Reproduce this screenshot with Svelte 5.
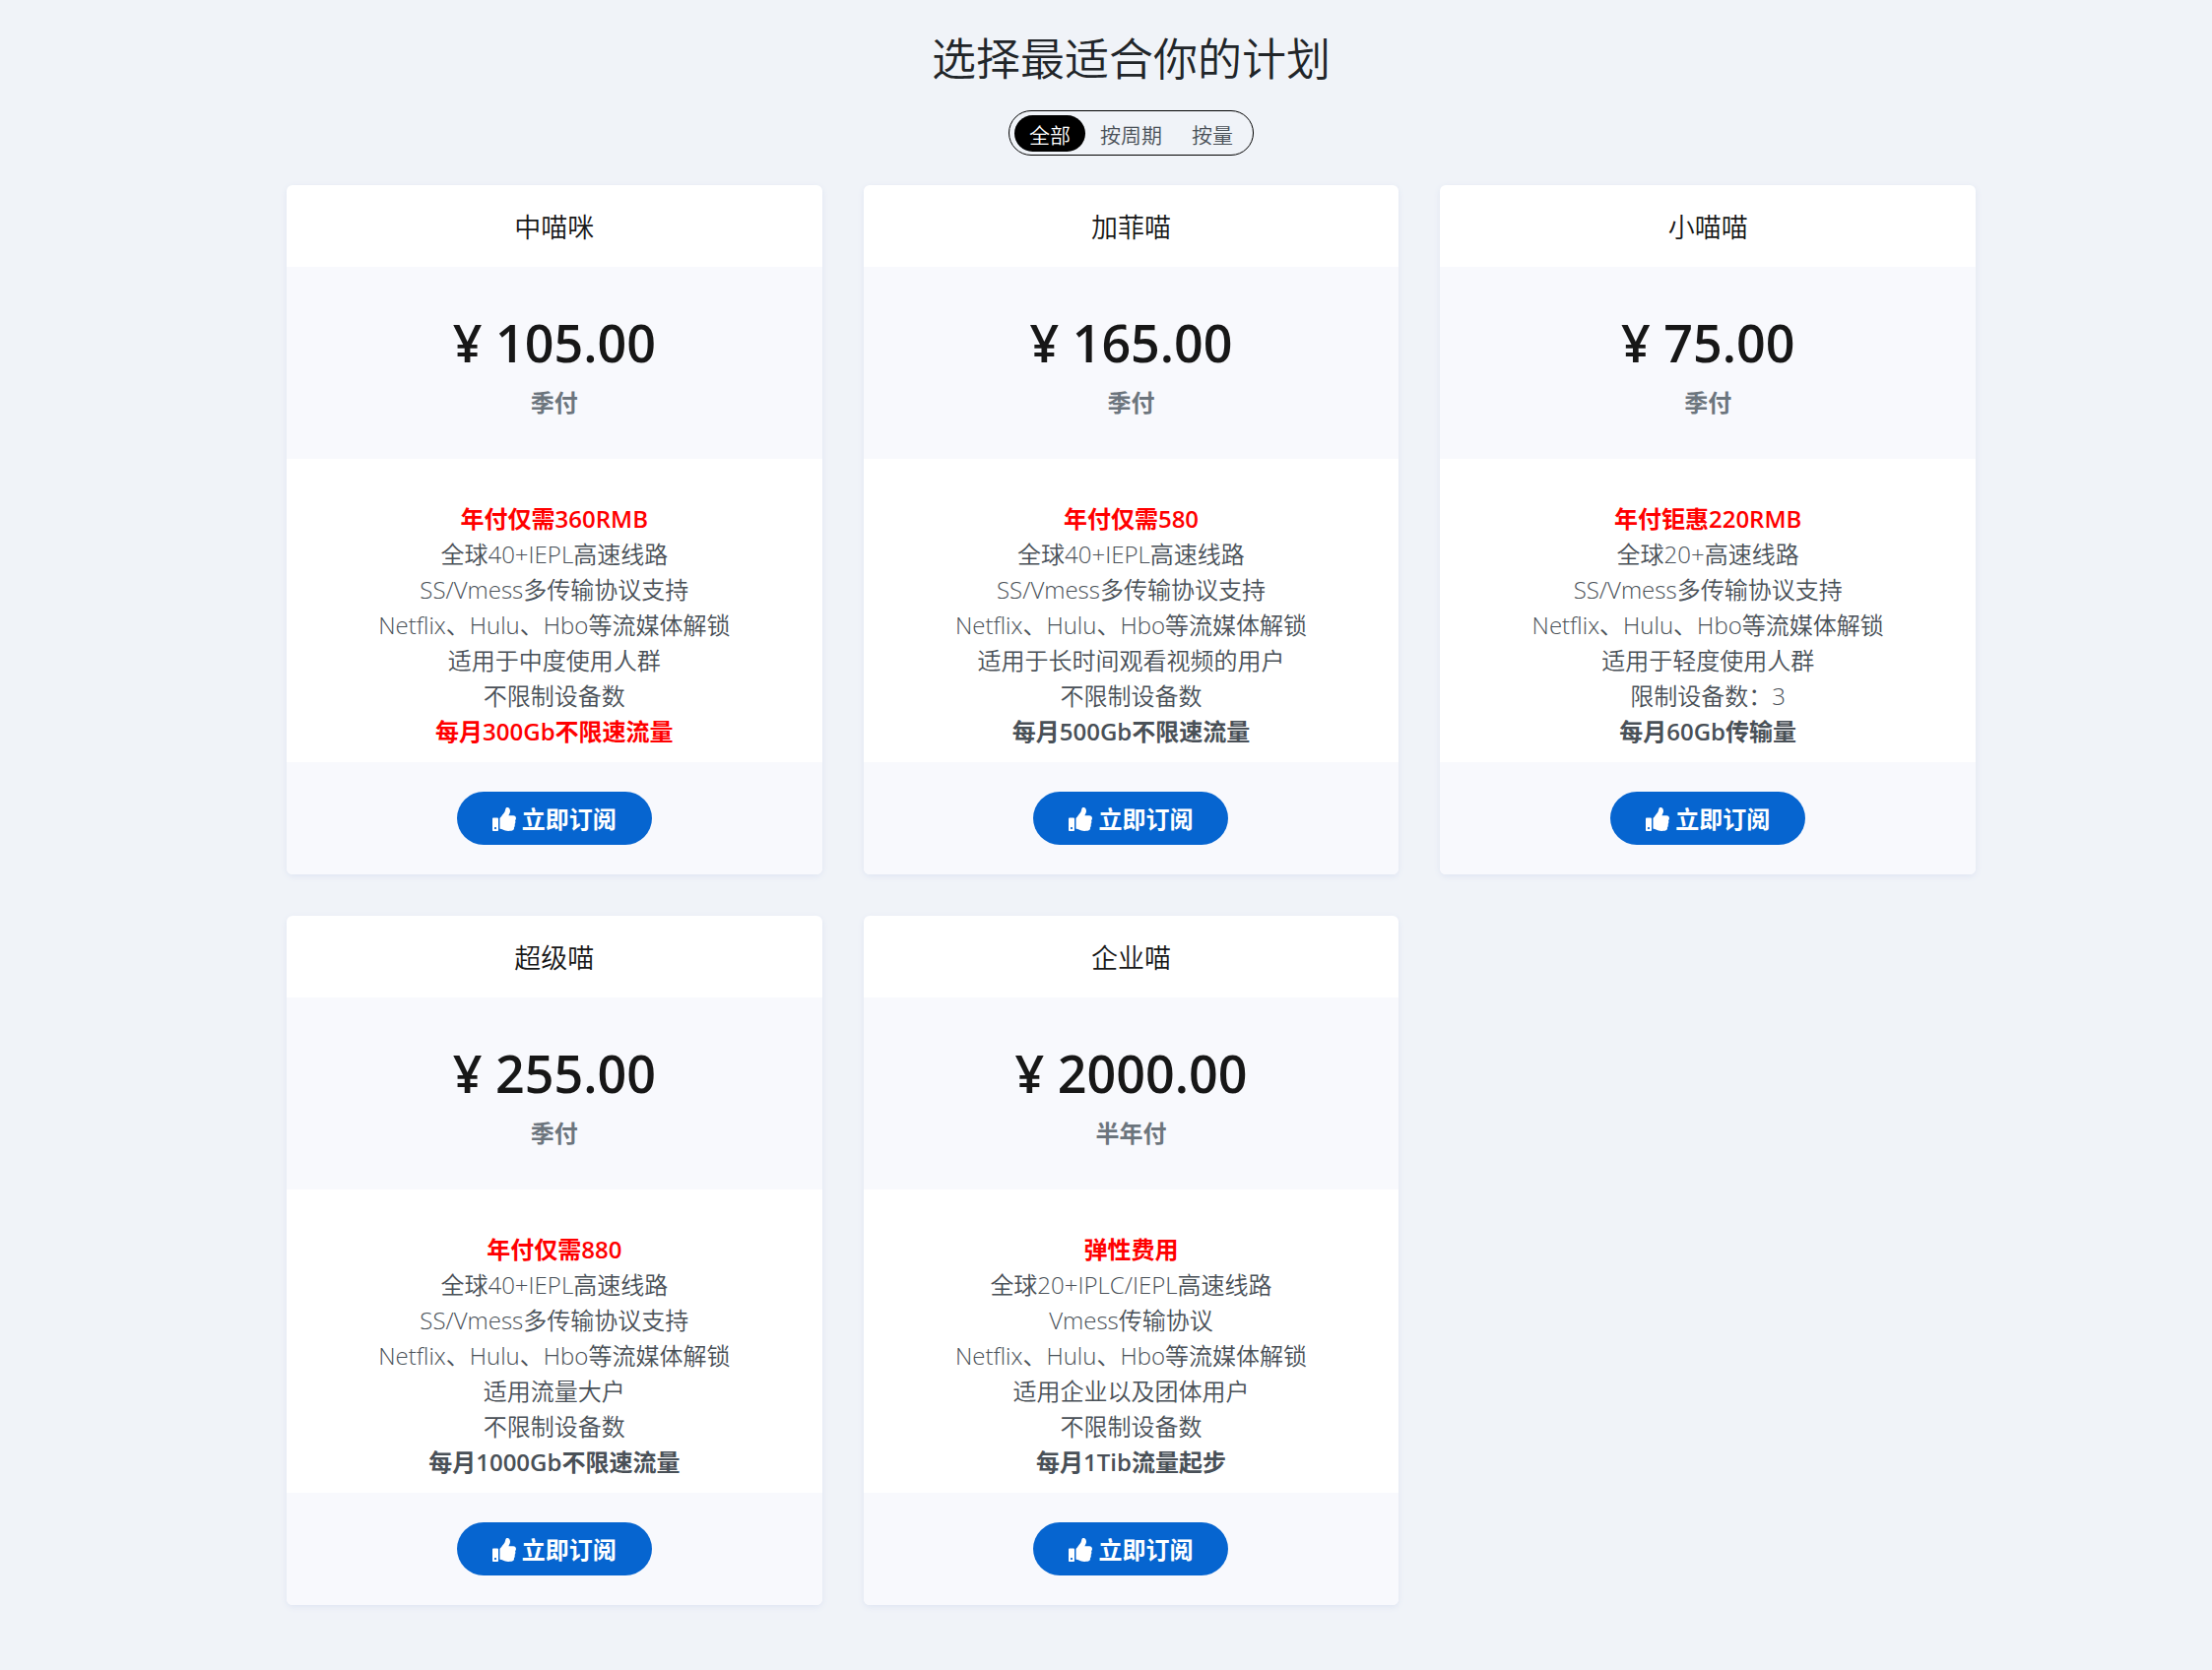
<script lang="ts">
	interface Plan {
		name: string;
		price: string;
		cycle: string;
		type: string;
		promo: string;
		features: string[];
		traffic: string;
		hot?: boolean;
	}

	const tabs = [
		{ key: 'all', label: '全部' },
		{ key: 'period', label: '按周期' },
		{ key: 'traffic', label: '按量' }
	];

	const plans: Plan[] = [
		{
			name: '中喵咪',
			price: '105.00',
			cycle: '季付',
			type: 'period',
			promo: '年付仅需360RMB',
			features: [
				'全球40+IEPL高速线路',
				'SS/Vmess多传输协议支持',
				'Netflix、Hulu、Hbo等流媒体解锁',
				'适用于中度使用人群',
				'不限制设备数'
			],
			traffic: '每月300Gb不限速流量',
			hot: true
		},
		{
			name: '加菲喵',
			price: '165.00',
			cycle: '季付',
			type: 'period',
			promo: '年付仅需580',
			features: [
				'全球40+IEPL高速线路',
				'SS/Vmess多传输协议支持',
				'Netflix、Hulu、Hbo等流媒体解锁',
				'适用于长时间观看视频的用户',
				'不限制设备数'
			],
			traffic: '每月500Gb不限速流量'
		},
		{
			name: '小喵喵',
			price: '75.00',
			cycle: '季付',
			type: 'period',
			promo: '年付钜惠220RMB',
			features: [
				'全球20+高速线路',
				'SS/Vmess多传输协议支持',
				'Netflix、Hulu、Hbo等流媒体解锁',
				'适用于轻度使用人群',
				'限制设备数：3'
			],
			traffic: '每月60Gb传输量'
		},
		{
			name: '超级喵',
			price: '255.00',
			cycle: '季付',
			type: 'period',
			promo: '年付仅需880',
			features: [
				'全球40+IEPL高速线路',
				'SS/Vmess多传输协议支持',
				'Netflix、Hulu、Hbo等流媒体解锁',
				'适用流量大户',
				'不限制设备数'
			],
			traffic: '每月1000Gb不限速流量'
		},
		{
			name: '企业喵',
			price: '2000.00',
			cycle: '半年付',
			type: 'period',
			promo: '弹性费用',
			features: [
				'全球20+IPLC/IEPL高速线路',
				'Vmess传输协议',
				'Netflix、Hulu、Hbo等流媒体解锁',
				'适用企业以及团体用户',
				'不限制设备数'
			],
			traffic: '每月1Tib流量起步'
		}
	];

	let activeTab = $state('all');
	let visiblePlans = $derived(
		activeTab === 'all' ? plans : plans.filter((plan) => plan.type === activeTab)
	);
</script>

<main class="page">
	<h1 class="page-title">选择最适合你的计划</h1>

	<div class="tabs-wrap">
		<div class="tabs">
			{#each tabs as tab}
				<button
					class="tab"
					class:active={activeTab === tab.key}
					onclick={() => (activeTab = tab.key)}
				>
					{tab.label}
				</button>
			{/each}
		</div>
	</div>

	<div class="plans">
		{#each visiblePlans as plan (plan.name)}
			<section class="plan">
				<h2 class="plan-name">{plan.name}</h2>

				<div class="plan-price">
					<p class="amount">¥ {plan.price}</p>
					<p class="cycle">{plan.cycle}</p>
				</div>

				<ul class="plan-features">
					<li class="strong red">{plan.promo}</li>
					{#each plan.features as feature}
						<li>{feature}</li>
					{/each}
					<li class="strong" class:red={plan.hot}>{plan.traffic}</li>
				</ul>

				<div class="plan-footer">
					<button class="subscribe">
						<svg class="thumb" viewBox="0 0 512 512" fill="currentColor" aria-hidden="true">
							<path d="M104 224H24c-13.255 0-24 10.745-24 24v240c0 13.255 10.745 24 24 24h80c13.255 0 24-10.745 24-24V248c0-13.255-10.745-24-24-24zM64 472c-13.255 0-24-10.745-24-24s10.745-24 24-24 24 10.745 24 24-10.745 24-24 24zM384 81.452c0 42.416-25.97 66.208-33.277 94.548h101.723c33.397 0 59.397 27.746 59.553 58.098.084 17.938-7.546 37.249-19.439 49.197l-.11.11c9.836 23.337 8.237 56.037-9.308 79.469 8.681 25.895-.069 57.704-16.382 74.757 4.298 17.598 2.244 32.575-6.148 44.632C440.202 511.587 389.616 512 346.839 512l-2.845-.001c-48.287-.017-87.806-17.598-119.56-31.725-15.957-7.099-36.821-15.887-52.651-16.178-6.54-.12-11.783-5.457-11.783-11.998v-213.77c0-3.2 1.282-6.271 3.558-8.521 39.614-39.144 56.648-80.587 89.117-113.111 14.804-14.832 20.188-37.236 25.393-58.902C282.515 39.293 291.817 0 312 0c24 0 72 8 72 81.452z" />
						</svg>
						立即订阅
					</button>
				</div>
			</section>
		{/each}
	</div>
</main>

<style>
	:global(body) {
		margin: 0;
		background: #f0f3f8;
	}

	.page {
		max-width: 1715px;
		margin: 0 auto;
		padding: 30px 24px 66px 75px;
		font-family: 'Open Sans', 'Noto Sans CJK SC', sans-serif;
		font-size: 24px;
		font-weight: 350;
		line-height: 36px;
		color: #495057;
		text-align: center;
	}

	.page-title {
		margin: 0 0 22px;
		font-size: 45px;
		font-weight: 350;
		line-height: 60px;
		color: #212529;
	}

	/* Filter tabs */
	.tabs-wrap {
		display: flex;
		justify-content: center;
		margin-bottom: 30px;
	}

	.tabs {
		display: flex;
		padding: 4px 5px 3px;
		border: 1px solid #000;
		border-radius: 23px;
	}

	.tab {
		height: 37px;
		padding: 3px 15px 0;
		border: none;
		border-radius: 19px;
		background: transparent;
		color: #495057;
		font-family: inherit;
		font-size: 21px;
		font-weight: 350;
		line-height: 34px;
		cursor: pointer;
	}

	.tab.active {
		background: #000;
		color: #fff;
	}

	/* Plan cards */
	.plans {
		display: grid;
		grid-template-columns: repeat(3, 1fr);
		gap: 42px;
	}

	.plan {
		overflow: hidden;
		border-radius: 6px;
		background: #fff;
		box-shadow: 0 2px 6px #dfe5f2;
	}

	.plan-name {
		margin: 0;
		padding: 25px 30px 22px;
		font-size: 27px;
		font-weight: 350;
		line-height: 36px;
		color: #171717;
	}

	.plan-price {
		padding: 47px 30px 36px;
		background: #f8f9fd;
	}

	.amount {
		margin: 0 0 13px;
		font-size: 52px;
		font-weight: 600;
		line-height: 60px;
		color: #171717;
	}

	.cycle {
		margin: 0 0 3px;
		font-weight: 700;
		color: #6c757d;
	}

	.plan-features {
		margin: 0;
		padding: 43px 30px 13px;
		list-style: none;
	}

	.strong {
		font-weight: 600;
	}

	.red {
		color: #f00;
	}

	.plan-footer {
		display: flex;
		justify-content: center;
		padding: 30px;
		background: #f8f9fd;
	}

	.subscribe {
		display: flex;
		align-items: center;
		gap: 6px;
		height: 54px;
		padding: 2px 36px 0;
		border: none;
		border-radius: 27px;
		background: #0665d0;
		color: #fff;
		font-family: inherit;
		font-size: 24px;
		font-weight: 700;
		line-height: 36px;
		cursor: pointer;
	}

	.thumb {
		width: 24px;
		height: 24px;
	}

	@media (max-width: 1200px) {
		.plans {
			grid-template-columns: repeat(2, 1fr);
		}
	}

	@media (max-width: 768px) {
		.page {
			padding: 24px;
		}

		.plans {
			grid-template-columns: 1fr;
		}
	}
</style>
